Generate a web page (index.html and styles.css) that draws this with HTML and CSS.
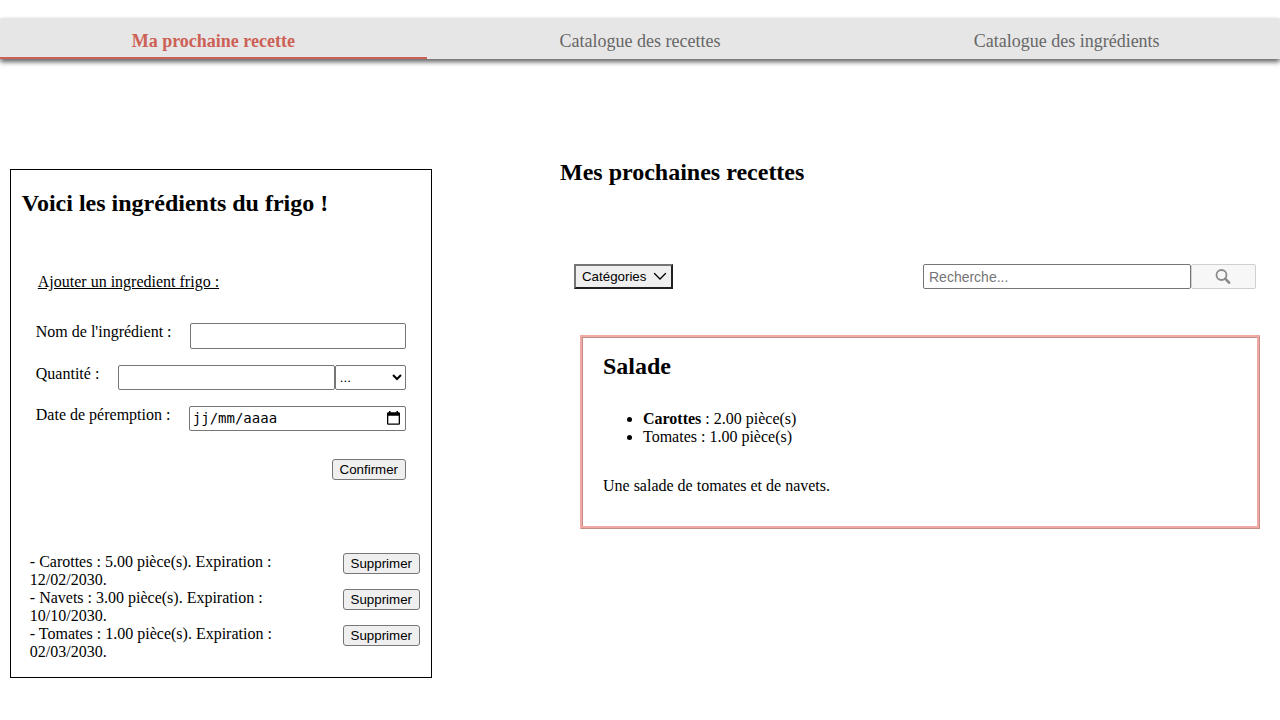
FILE: index.html
```html
<!DOCTYPE html>
<html lang="fr">
<head>
<meta charset="utf-8">
<title>Ma prochaine recette</title>
<link rel="stylesheet" href="styles.css">
</head>
<body>
<nav class="tabs">
  <a class="tab active">Ma prochaine recette</a>
  <a class="tab">Catalogue des recettes</a>
  <a class="tab">Catalogue des ingrédients</a>
</nav>
<main class="page">
  <section class="fridge">
    <h2 class="title">Voici les ingrédients du frigo !</h2>
    <form class="form">
      <u class="legend">Ajouter un ingredient frigo :</u>
      <label class="row name"><span>Nom de l'ingrédient :</span><input class="field" type="text"></label>
      <label class="row quantity"><span>Quantité :</span><input class="field" type="text"><select class="unit"><option>...</option></select></label>
      <div class="row expiry"><span>Date de péremption :</span>
        <div class="date"><span>jj/mm/aaaa</span>
          <svg width="13" height="14" viewBox="0 0 13 14"><path fill="#000" fill-rule="evenodd" d="M2 0h1.500v1.200h6V0H11v1.200h.8q1.200 0 1.200 1.200v10.200q0 1.200-1.200 1.200H1.200Q0 13.800 0 12.600V2.400Q0 1.200 1.200 1.200H2zM1.300 4.700v7.800h10.400V4.700z"/></svg>
        </div>
      </div>
      <button class="button confirm" type="button">Confirmer</button>
    </form>
    <div class="stock">
      <div class="item"><span class="text">- Carottes : 5.00 pièce(s). Expiration : 12/02/2030.</span><button class="button">Supprimer</button></div>
      <div class="item"><span class="text">- Navets : 3.00 pièce(s). Expiration : 10/10/2030.</span><button class="button">Supprimer</button></div>
      <div class="item"><span class="text">- Tomates : 1.00 pièce(s). Expiration : 02/03/2030.</span><button class="button">Supprimer</button></div>
    </div>
  </section>
  <section class="recipes">
    <h2 class="title">Mes prochaines recettes</h2>
    <div class="toolbar">
      <button class="categories">Catégories
        <svg width="14" height="9" viewBox="0 0 14 9"><path d="M1.500 1.500 7 7l5.500-5.500" fill="none" stroke="#000" stroke-width="1.300" stroke-linecap="round"/></svg>
      </button>
      <div class="search">
        <input class="query" type="text" placeholder="Recherche...">
        <button class="submit" disabled>
          <svg width="16" height="16" viewBox="0 0 16 16" fill="none" stroke="#8b8b8b"><circle cx="6.500" cy="6" r="5" stroke-width="1.800"/><path d="m10.200 9.700 3.900 4" stroke-width="2.600" stroke-linecap="round"/></svg>
        </button>
      </div>
    </div>
    <article class="recipe">
      <h2 class="title">Salade</h2>
      <ul class="ingredients">
        <li><b>Carottes</b> : 2.00 pièce(s)</li>
        <li>Tomates : 1.00 pièce(s)</li>
      </ul>
      <p class="description">Une salade de tomates et de navets.</p>
    </article>
  </section>
</main>
</body>
</html>
```
FILE: styles.css
```css
* { box-sizing: border-box; }
body {
  margin: 0;
  padding-top: 18px;
  font: 16px/18px "Liberation Serif", serif;
  color: #000;
}
.tabs {
  display: grid;
  grid-template-columns: repeat(3, 1fr);
  height: 41px;
  background: #e6e6e6;
  border-radius: 3px 3px 0 0;
  box-shadow: 0 3px 5px rgba(0, 0, 0, .62);
}
.tab {
  padding-top: 13px;
  font-size: 18px;
  line-height: 20px;
  text-align: center;
  color: #666;
  border-bottom: 2px solid transparent;
}
.tab.active {
  font-weight: bold;
  color: #cd6155;
  border-color: #cd6155;
}
.page {
  display: flex;
  align-items: flex-start;
}
.title {
  margin: 0;
  font-size: 24px;
  line-height: 27px;
}
.fridge {
  width: 422px;
  height: 509px;
  margin: 110px 0 0 9.8px;
  padding: 20px 11px 0;
  border: 1px solid #000;
}
.form {
  display: flex;
  flex-direction: column;
  padding: 56px 14px 0;
}
.legend { margin-left: 2px; }
.row {
  display: flex;
  margin-top: 16px;
}
.row > span {
  flex: 1;
  white-space: nowrap;
}
.name { margin-top: 32px; }
.field, .date {
  flex: none;
  width: 217px;
  height: 25px;
  margin: 0;
  border: 1px solid #767676;
  border-radius: 2px;
  background: #fff;
}
.name .field {
  width: 216px;
  height: 26px;
}
.unit {
  width: 71px;
  height: 25px;
  margin: 0;
  border: 1px solid #767676;
  border-radius: 2px;
  background: #fff;
  font: 13.333px "Liberation Sans", sans-serif;
}
.date {
  display: flex;
  align-items: center;
  justify-content: space-between;
  padding: 0 5px 1px 3px;
  font: 14px "DejaVu Sans Mono", monospace;
}
.button {
  height: 21px;
  margin: 0;
  padding: 1px 6px;
  font: 13.333px "Liberation Sans", sans-serif;
  border: 1px solid #767676;
  border-radius: 3px;
  background: #efefef;
  color: #000;
}
.confirm {
  align-self: flex-end;
  width: 74px;
  margin-top: 28px;
}
.stock { margin: 73px 0 0 8px; }
.item {
  display: flex;
  justify-content: space-between;
  align-items: flex-start;
}
.item .text { width: 260px; }
.item .button { width: 77px; }
.recipes {
  width: 700px;
  margin: 100px 0 0 128.2px;
}
.toolbar {
  display: flex;
  justify-content: space-between;
  margin: 78px 4px 0 14px;
}
.categories {
  display: flex;
  align-items: center;
  justify-content: space-between;
  width: 99px;
  height: 25px;
  padding: 1px 4px 1px 6px;
  border: 2px solid;
  border-color: #767676 #212121 #212121 #767676;
  background: #efefef;
  font: 13.333px "Liberation Sans", sans-serif;
  color: #000;
}
.search { display: flex; }
.query {
  width: 268px;
  height: 25px;
  margin: 0;
  padding: 1px 5px;
  border: 1px solid #767676;
  border-radius: 2px;
  font: 14px "Liberation Sans", sans-serif;
}
.query::placeholder { color: #757575; }
.submit {
  display: flex;
  align-items: center;
  justify-content: center;
  width: 65px;
  height: 25px;
  margin: 0;
  padding: 0;
  border: 1px solid #d0d0d0;
  border-radius: 2px;
  background: #f7f7f7;
}
/* Bevelled frame: two light pixels and one dark pixel on every side */
.recipe {
  width: 680px;
  height: 194px;
  margin: 46px 0 0 20px;
  padding: 16px 21px;
  border-style: solid;
  border-width: 2px 1px 1px 2px;
  border-color: #f1a9a4 #c48c89 #c48c89 #f1a9a4;
  box-shadow: inset -2px -2px #f1a9a4, inset 1px 1px #c48c89;
}
.ingredients {
  margin: 30px 0 31px;
  padding-left: 40px;
}
.description { margin: 0; }
```
